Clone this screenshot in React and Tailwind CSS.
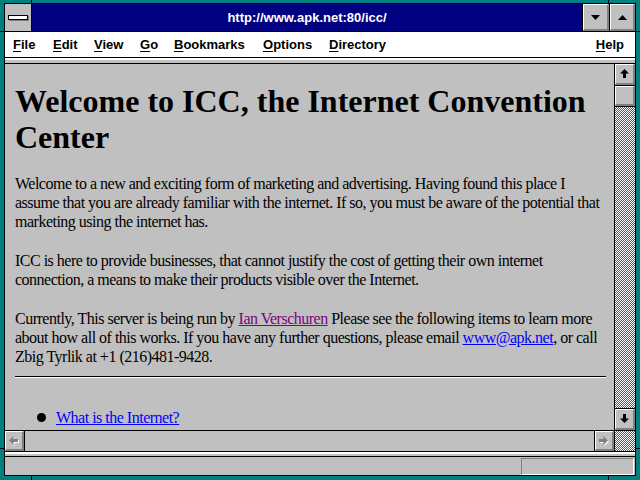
import React from "react";

const dither =
  "bg-[conic-gradient(#008080_25%,#ffffff_0_50%,#008080_0_75%,#ffffff_0)] bg-[length:2px_2px]";

function Bevel({ className = "", children }) {
  return (
    <div
      className={
        "flex items-center justify-center bg-[#c0c0c0] border-t border-l border-t-white border-l-white border-b-2 border-r-2 border-b-[#808080] border-r-[#808080] " +
        className
      }
    >
      {children}
    </div>
  );
}

function Arrow({ dir, color = "#000", shadow }) {
  const shapes = {
    up: "4.5,0 9,4.5 6,4.5 6,9 3,9 3,4.5 0,4.5",
    down: "3,0 6,0 6,4.5 9,4.5 4.5,9 0,4.5 3,4.5",
    left: "0,4.5 4.5,0 4.5,3 9,3 9,6 4.5,6 4.5,9",
    right: "9,4.5 4.5,0 4.5,3 0,3 0,6 4.5,6 4.5,9",
  };
  return (
    <svg width="10" height="10" viewBox="0 0 10 10">
      {shadow && <polygon points={shapes[dir]} fill={shadow} transform="translate(1,1)" />}
      <polygon points={shapes[dir]} fill={color} />
    </svg>
  );
}

function Tri({ up }) {
  return (
    <svg width="9" height="5" viewBox="0 0 9 5">
      <polygon points={up ? "4.5,0 9,5 0,5" : "0,0 9,0 4.5,5"} fill="#000" />
    </svg>
  );
}

function MenuItem({ k, rest, className = "" }) {
  return (
    <span className={className}>
      <span className="underline underline-offset-2">{k}</span>
      {rest}
    </span>
  );
}

export default function App() {
  return (
    <div className="relative w-[640px] h-[480px] bg-[#008080] pt-[3px] px-[4px] pb-[4px] overflow-hidden">
      {/* frame corner ticks */}
      <div className="absolute left-[31px] top-0 w-px h-[3px] bg-black" />
      <div className="absolute left-[608px] top-0 w-px h-[3px] bg-black" />
      <div className="absolute left-[31px] bottom-0 w-px h-[4px] bg-black" />
      <div className="absolute left-[608px] bottom-0 w-px h-[4px] bg-black" />
      <div className="absolute left-0 top-[31px] w-[4px] h-px bg-black" />
      <div className="absolute left-0 top-[448px] w-[4px] h-px bg-black" />
      <div className="absolute right-0 top-[31px] w-[4px] h-px bg-black" />
      <div className="absolute right-0 top-[448px] w-[4px] h-px bg-black" />

      <div className="h-full border border-black flex flex-col bg-[#c0c0c0]">
        {/* title bar */}
        <div className="h-[28px] flex border-b border-black shrink-0">
          <div className="w-[27px] border-r border-black flex items-center justify-center">
            <div className="w-[20px] h-[5px] bg-white border border-black shadow-[1px_1px_0_#808080]" />
          </div>
          <div className="flex-1 bg-[#000080] text-white font-bold text-[13px] flex items-center justify-center font-['Liberation_Sans',Arial,sans-serif]">
            http://www.apk.net:80/icc/
          </div>
          <div className="w-[27px] border-l border-black flex">
            <Bevel className="flex-1">
              <Tri />
            </Bevel>
          </div>
          <div className="w-[26px] border-l border-black flex">
            <Bevel className="flex-1">
              <Tri up />
            </Bevel>
          </div>
        </div>

        {/* menu bar */}
        <div className="h-[26px] bg-white border-b border-black flex items-center pl-[8px] pr-[11px] text-[13px] font-bold text-black font-['Liberation_Sans',Arial,sans-serif] shrink-0">
          <MenuItem k="F" rest="ile" className="w-[40px]" />
          <MenuItem k="E" rest="dit" className="w-[41px]" />
          <MenuItem k="V" rest="iew" className="w-[46px]" />
          <MenuItem k="G" rest="o" className="w-[34px]" />
          <MenuItem k="B" rest="ookmarks" className="w-[89px]" />
          <MenuItem k="O" rest="ptions" className="w-[66px]" />
          <MenuItem k="D" rest="irectory" />
          <span className="ml-auto">
            <MenuItem k="H" rest="elp" />
          </span>
        </div>
        <div className="h-[6px] border-t-2 border-white border-b border-b-black shrink-0" />

        {/* main area */}
        <div className="h-[387px] flex shrink-0">
          <div className="flex-1 flex flex-col min-w-0">
            <div className="h-[366px] overflow-hidden pl-[10px] pr-[8px] pt-[19px] text-black whitespace-nowrap font-['Liberation_Serif','Times_New_Roman',serif]">
              <h1 className="text-[32px] leading-[36px] font-bold">
                Welcome to ICC, the Internet Convention
                <br />
                Center
              </h1>
              <div className="text-[16px] leading-[19px] tracking-[-0.5px]">
                <p className="mt-[19px]">
                  Welcome to a new and exciting form of marketing and advertising. Having found this place I
                  <br />
                  assume that you are already familiar with the internet. If so, you must be aware of the potential that
                  <br />
                  marketing using the internet has.
                </p>
                <p className="mt-[20px]">
                  ICC is here to provide businesses, that cannot justify the cost of getting their own internet
                  <br />
                  connection, a means to make their products visible over the Internet.
                </p>
                <p className="mt-[20px]">
                  Currently, This server is being run by{" "}
                  <span className="text-[#800080] underline">Ian Verschuren</span> Please see the following items to learn more
                  <br />
                  about how all of this works. If you have any further questions, please email{" "}
                  <span className="text-[#0000ff] underline">www@apk.net</span>, or call
                  <br />
                  Zbig Tyrlik at +1 (216)481-9428.
                </p>
                <div className="mt-[10px] border-t border-black border-b border-b-white" />
                <ul className="mt-[30px] pl-[22px]">
                  <li className="flex items-center gap-[10px]">
                    <span className="w-[9px] h-[9px] rounded-full bg-black inline-block" />
                    <span className="text-[#0000ff] underline">What is the Internet?</span>
                  </li>
                </ul>
              </div>
            </div>
            {/* horizontal scrollbar */}
            <div className="h-[21px] border-t border-black flex">
              <div className="w-[20px] border-r border-black flex">
                <Bevel className="flex-1">
                  <Arrow dir="left" color="#808080" shadow="#ffffff" />
                </Bevel>
              </div>
              <div className="flex-1" />
              <div className="w-[20px] border-l border-black flex">
                <Bevel className="flex-1">
                  <Arrow dir="right" color="#808080" shadow="#ffffff" />
                </Bevel>
              </div>
            </div>
          </div>
          {/* vertical scrollbar */}
          <div className="w-[21px] border-l border-black flex flex-col">
            <div className="h-[22px] border-b border-black flex">
              <Bevel className="flex-1">
                <Arrow dir="up" />
              </Bevel>
            </div>
            <div className="h-[21px] border-b border-black flex">
              <Bevel className="flex-1" />
            </div>
            <div className={"flex-1 " + dither} />
            <div className="h-[23px] border-t border-b border-black flex">
              <Bevel className="flex-1">
                <Arrow dir="down" />
              </Bevel>
            </div>
            <div className={"h-[20px] " + dither} />
          </div>
        </div>

        {/* separator */}
        <div className="h-[6px] border-t border-black border-b bg-[#c0c0c0] shrink-0 flex flex-col">
          <div className="h-[2px] bg-white" />
        </div>

        {/* status bar */}
        <div className="flex-1 flex items-center justify-end pr-[1px]">
          <div className="w-[113px] h-[17px] border-t border-l border-[#808080] border-b border-r border-b-white border-r-white" />
        </div>
      </div>
    </div>
  );
}
